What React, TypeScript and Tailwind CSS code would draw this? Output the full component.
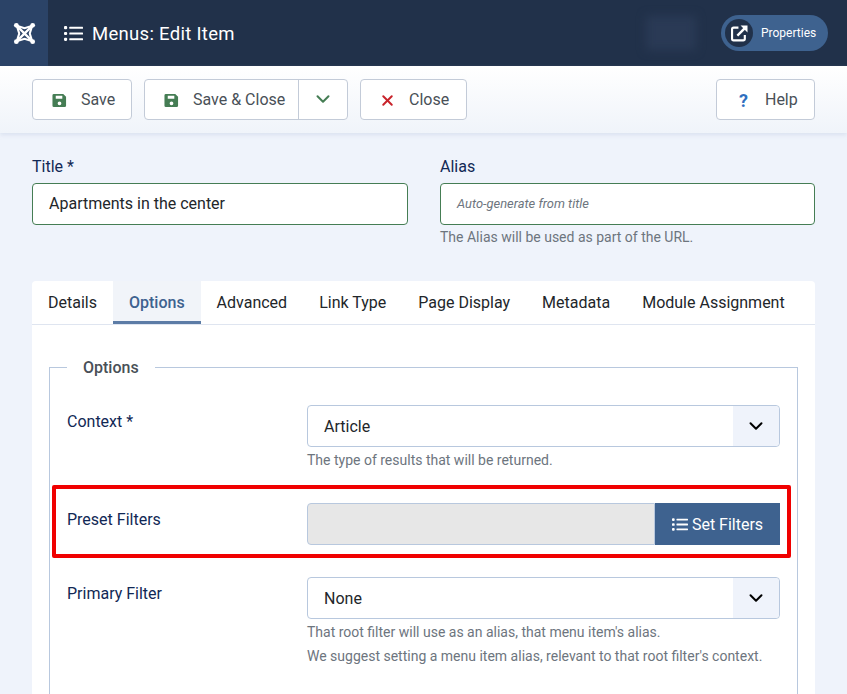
import { ChevronDown, X } from "lucide-react";

function ListIcon({ className }: { className: string }) {
  return (
    <svg viewBox="0 0 18 16" className={className} fill="currentColor">
      <rect x="0" y="1" width="3" height="3" rx="1" />
      <rect x="0" y="6.500" width="3" height="3" rx="1" />
      <rect x="0" y="12" width="3" height="3" rx="1" />
      <rect x="5" y="1.500" width="13" height="2" rx="0.500" />
      <rect x="5" y="7" width="13" height="2" rx="0.500" />
      <rect x="5" y="12.500" width="13" height="2" rx="0.500" />
    </svg>
  );
}

function SaveIcon() {
  return (
    <svg viewBox="0 0 16 16" className="h-[15px] w-[15px] text-[#457d54]">
      <path
        fill="currentColor"
        fillRule="evenodd"
        d="M2 1h10l3 3v9.500a1.500 1.500 0 0 1-1.500 1.500h-11.500a1.500 1.500 0 0 1-1.500-1.500v-11a1.500 1.500 0 0 1 1.500-1.500zM4 3v3h7v-3zM8 9a2 2 0 1 0 0 4 2 2 0 0 0 0-4z"
      />
    </svg>
  );
}

function JoomlaLogo() {
  return (
    <svg viewBox="0 0 24 24" className="h-[23px] w-[23px] text-white" fill="none" stroke="currentColor">
      <path strokeWidth="2.400" d="M4 4l16 16M20 4L4 20" />
      <path strokeWidth="2.200" d="M4 4L12 6.500L20 4L17.500 12L20 20L12 17.500L4 20L6.500 12z" />
      <circle cx="3.500" cy="3.500" r="2.500" fill="currentColor" stroke="none" />
      <circle cx="20.500" cy="3.500" r="2.500" fill="currentColor" stroke="none" />
      <circle cx="3.500" cy="20.500" r="2.500" fill="currentColor" stroke="none" />
      <circle cx="20.500" cy="20.500" r="2.500" fill="currentColor" stroke="none" />
    </svg>
  );
}

function LinkIcon() {
  return (
    <svg viewBox="0 0 16 16" className="h-[17px] w-[17px]" fill="none" stroke="currentColor">
      <path strokeWidth="2" d="M7 2.500H2.500a1.500 1.500 0 0 0-1.500 1.500v9a1.500 1.500 0 0 0 1.500 1.500h9a1.500 1.500 0 0 0 1.500-1.500V9.500" />
      <path strokeWidth="2.200" d="M6 10l7.500-7.500" />
      <path fill="currentColor" stroke="none" d="M9 0.500h6.500V7z" />
    </svg>
  );
}

function SelectBox({ value }: { value: string }) {
  return (
    <div className="flex h-[42px] items-center rounded-[4px] border border-[#b8c8de] bg-white">
      <span className="flex-1 pl-4 pt-[2px] text-base text-[#22262a]">{value}</span>
      <span className="flex h-full w-[46px] items-center justify-center rounded-r-[4px] bg-[#eff3fb]">
        <ChevronDown className="h-[22px] w-[22px] text-black" strokeWidth={2.200} />
      </span>
    </div>
  );
}

export default function App() {
  const tabs = ["Details", "Options", "Advanced", "Link Type", "Page Display", "Metadata", "Module Assignment"];

  return (
    <div className="relative h-[694px] overflow-hidden bg-[#eff3fb] font-['Roboto',sans-serif]">
      {/* Header */}
      <header className="flex h-[66px] items-center bg-[#21314a] text-white">
        <div className="flex h-full w-[48px] items-center justify-center bg-[#2b4367]">
          <JoomlaLogo />
        </div>
        <div className="ml-4 flex items-center gap-[9px]">
          <ListIcon className="h-[17px] w-[19px]" />
          <h1 className="pt-[2px] text-[18.500px] leading-none tracking-[0.3px]">Menus: Edit Item</h1>
        </div>
        <div className="ml-auto mr-[19px] flex items-center gap-[25px]">
          <div className="h-[34px] w-[50px] bg-[#2a3a55] blur-[5px]" />
          <div className="flex h-[36px] w-[107px] items-center rounded-full bg-[#3e628f] pl-1">
            <span className="flex h-[28px] w-[28px] items-center justify-center rounded-full bg-[#21314a]">
              <LinkIcon />
            </span>
            <span className="ml-2 text-xs">Properties</span>
          </div>
        </div>
      </header>

      {/* Toolbar */}
      <div className="flex h-[67px] items-center justify-between bg-gradient-to-b from-white to-[#f0f4fa] px-8 pb-[1px] shadow-[0_2px_4px_rgba(180,195,220,0.35)]">
        <div className="flex gap-3">
          <button className="flex h-[41px] w-[100px] items-center rounded-[4px] border border-[#c3cbd8] bg-white pl-[19px] pt-[2px] text-base text-[#495057]">
            <SaveIcon />
            <span className="ml-[14px]">Save</span>
          </button>
          <div className="flex h-[41px] w-[204px] items-center rounded-[4px] border border-[#c3cbd8] bg-white text-base text-[#495057]">
            <button className="flex h-full w-[154px] items-center border-r border-[#c3cbd8] pl-[19px] pt-[2px]">
              <SaveIcon />
              <span className="ml-[14px]">Save &amp; Close</span>
            </button>
            <span className="flex flex-1 items-center justify-center">
              <ChevronDown className="h-[22px] w-[22px] text-[#457d54]" strokeWidth={2.200} />
            </span>
          </div>
          <button className="flex h-[41px] w-[107px] items-center rounded-[4px] border border-[#c3cbd8] bg-white pl-[18px] pt-[2px] text-base text-[#495057]">
            <X className="h-[17px] w-[17px] text-[#c8222a]" strokeWidth={2.800} />
            <span className="ml-[13px]">Close</span>
          </button>
        </div>
        <button className="flex h-[41px] w-[99px] items-center rounded-[4px] border border-[#c3cbd8] bg-white pl-[22px] pt-[2px] text-base text-[#495057]">
          <span className="text-[18px] font-bold text-[#2f6fc0]">?</span>
          <span className="ml-[17px] text-[16px]">Help</span>
        </button>
      </div>

      {/* Title and alias */}
      <div className="mt-[22px] grid grid-cols-[376px_375px] gap-x-8 px-8">
        <div>
          <label className="block text-base leading-[24px] text-[#112855]">Title *</label>
          <div className="mt-[4px] flex h-[42px] items-center rounded-[4px] border border-[#457d54] bg-white pl-4 text-base text-[#22262a]">
            Apartments in the center
          </div>
        </div>
        <div>
          <label className="block text-base leading-[24px] text-[#112855]">Alias</label>
          <div className="mt-[4px] flex h-[42px] items-center rounded-[4px] border border-[#457d54] bg-white pl-4 text-[12.900px] italic text-[#6d757e]">
            Auto-generate from title
          </div>
          <p className="mt-[2px] text-sm leading-[20px] text-[#6d757e]">The Alias will be used as part of the URL.</p>
        </div>
      </div>

      {/* Tabs card */}
      <div className="mx-8 mt-[34px] rounded-t-[4px] bg-white pb-10">
        <div className="flex h-[44px] border-b border-[#dfe5f0]">
          {tabs.map((tab) =>
            tab === "Options" ? (
              <div
                key={tab}
                className="flex h-[43px] items-center border-b-[3px] border-[#5c7ca6] bg-[#f1f4f9] px-4 pt-[4px] text-base font-medium text-[#3e628f]"
              >
                {tab}
              </div>
            ) : (
              <div key={tab} className="flex h-[43px] items-center px-4 text-base text-[#22262a]">
                {tab}
              </div>
            ),
          )}
        </div>

        <div className="mx-[17px] mt-[42px] h-[400px] border border-[#b8c8de] px-[17px]">
          <div className="-mt-[12px] w-fit bg-white px-4 text-base font-medium leading-[24px] text-[#495057]">
            Options
          </div>

          <div className="mt-[25px] grid grid-cols-[240px_473px] gap-y-[14px]">
            <div className="pt-[5px] text-base leading-[24px] text-[#112855]">Context *</div>
            <div>
              <SelectBox value="Article" />
              <p className="mt-[3px] text-sm leading-[20px] text-[#6d757e]">The type of results that will be returned.</p>
            </div>

            <div className="mt-[19px] pt-[5px] text-base leading-[24px] text-[#112855]">Preset Filters</div>
            <div className="mt-[19px] flex h-[42px]">
              <div className="flex-1 rounded-l-[4px] border border-[#b8c8de] bg-[#e7e7e7]" />
              <button className="flex w-[125px] items-center justify-center gap-[4px] pt-[1px] bg-[#3e628f] text-base text-white">
                <ListIcon className="h-[15px] w-[16px]" />
                Set Filters
              </button>
            </div>

            <div className="mt-[18px] pt-[5px] text-base leading-[24px] text-[#112855]">Primary Filter</div>
            <div className="mt-[18px]">
              <SelectBox value="None" />
              <p className="mt-[1px] text-sm leading-[24px] text-[#6d757e]">That root filter will use as an alias, that menu item's alias.</p>
              <p className="text-sm leading-[24px] text-[#6d757e]">We suggest setting a menu item alias, relevant to that root filter's context.</p>
            </div>
          </div>
        </div>
      </div>

      {/* Red highlight */}
      <div className="absolute left-[52px] top-[485px] h-[73px] w-[739px] rounded-[2px] border-[4px] border-[#f00000]" />
    </div>
  );
}
